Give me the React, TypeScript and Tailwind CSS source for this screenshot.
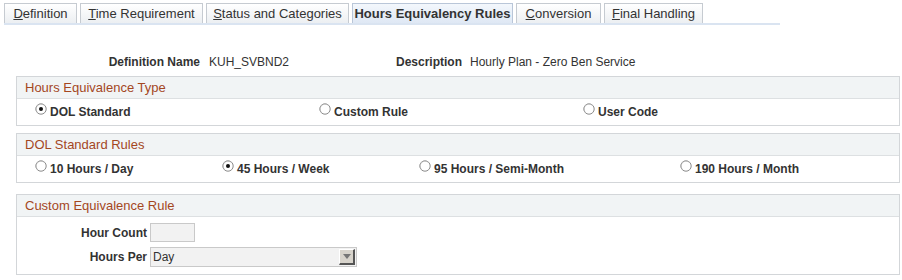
import React from 'react';

const tabs = [
  { label: 'Definition', key: 'D', w: 73 },
  { label: 'Time Requirement', key: 'T', w: 123 },
  { label: 'Status and Categories', key: 'S', w: 143 },
  { label: 'Hours Equivalency Rules', key: '', w: 161, active: true },
  { label: 'Conversion', key: 'C', w: 85 },
  { label: 'Final Handling', key: 'F', w: 99 },
];

function Radio({ checked }: { checked?: boolean }) {
  return (
    <svg width="12" height="12" viewBox="0 0 12 12" className="shrink-0">
      <circle cx="6" cy="6" r="5.2" fill="#fff" stroke="#8a8a8a" strokeWidth="1" />
      <path d="M2 9 A5 5 0 0 1 9 2" fill="none" stroke="#b8b8b8" strokeWidth="0.8" />
      {checked && <circle cx="6" cy="6" r="2" fill="#111" />}
    </svg>
  );
}

function Option({ label, checked, className }: { label: string; checked?: boolean; className?: string }) {
  return (
    <div className={`flex items-center gap-[3px] ${className ?? ''}`}>
      <span className="-mt-[6px]">
        <Radio checked={checked} />
      </span>
      <span className="font-bold text-[#333]">{label}</span>
    </div>
  );
}

function Section({ title, children }: { title: string; children: React.ReactNode }) {
  return (
    <div className="border border-[#d3d6d9] ml-[16px] w-[884px]">
      <div className="h-[22px] bg-[#f1f4f5] border-b border-[#dde0e2] px-[8px] flex items-center text-[13px] text-[#a4471f]">
        {title}
      </div>
      {children}
    </div>
  );
}

export default function App() {
  return (
    <div className="w-[902px] h-[280px] bg-white text-[12px] text-[#333]" style={{ fontFamily: 'Arial, "Liberation Sans", sans-serif' }}>
      <div className="pt-[3px] pl-[4px]">
        <div className="flex gap-[3px] items-end">
          {tabs.map((t) => (
            <div
              key={t.label}
              style={{ width: t.w }}
              className={`h-[20px] border border-b-0 flex items-center justify-center text-[13px] ${
                t.active
                  ? 'border-[#b9c6d8] bg-gradient-to-b from-[#f3f7fc] to-[#dfe8f4] font-bold text-[#333]'
                  : 'border-[#c6cbd1] bg-gradient-to-b from-[#ffffff] to-[#eceff2] text-[#333]'
              }`}
            >
              {t.key ? (
                <span>
                  <span className="underline">{t.label.charAt(0)}</span>
                  {t.label.slice(1)}
                </span>
              ) : (
                t.label
              )}
            </div>
          ))}
        </div>
        <div className="h-[2px] w-[776px] bg-[#dae4f1]" />
      </div>

      <div className="flex items-center h-[16px] mt-[29px]">
        <span className="w-[200px] text-right font-bold">Definition Name</span>
        <span className="ml-[9px] w-[150px]">KUH_SVBND2</span>
        <span className="w-[103px] text-right font-bold">Description</span>
        <span className="ml-[8px]">Hourly Plan - Zero Ben Service</span>
      </div>

      <div className="mt-[6px]">
        <Section title="Hours Equivalence Type">
          <div className="h-[26px] flex items-center pl-[18px]">
            <Option label="DOL Standard" checked className="w-[284px]" />
            <Option label="Custom Rule" className="w-[264px]" />
            <Option label="User Code" />
          </div>
        </Section>
      </div>

      <div className="mt-[7px]">
        <Section title="DOL Standard Rules">
          <div className="h-[26px] flex items-center pl-[18px]">
            <Option label="10 Hours / Day" className="w-[187px]" />
            <Option label="45 Hours / Week" checked className="w-[197px]" />
            <Option label="95 Hours / Semi-Month" className="w-[261px]" />
            <Option label="190 Hours / Month" />
          </div>
        </Section>
      </div>

      <div className="mt-[11px]">
        <Section title="Custom Equivalence Rule">
          <div className="pt-[6px] pb-[7px] flex flex-col gap-[5px]">
            <div className="flex items-center">
              <span className="w-[130px] text-right font-bold">Hour Count</span>
              <span className="ml-[3px] w-[45px] h-[19px] bg-[#f2f2f2] border border-[#c9c9c9]" />
            </div>
            <div className="flex items-center">
              <span className="w-[130px] text-right font-bold">Hours Per</span>
              <div className="ml-[3px] w-[207px] h-[20px] bg-[#f2f2f2] border border-[#c9c9c9] flex items-center justify-between">
                <span className="pl-[2px] text-[#333]">Day</span>
                <span className="w-[16px] h-[16px] mr-[1px] bg-[#d8d4cc] border-r-2 border-b-2 border-[#555] border-t border-l border-t-white border-l-white flex items-center justify-center">
                  <svg width="8" height="5" viewBox="0 0 8 5">
                    <path d="M0 0 L8 0 L4 5 Z" fill="#777" />
                  </svg>
                </span>
              </div>
            </div>
          </div>
        </Section>
      </div>
    </div>
  );
}
